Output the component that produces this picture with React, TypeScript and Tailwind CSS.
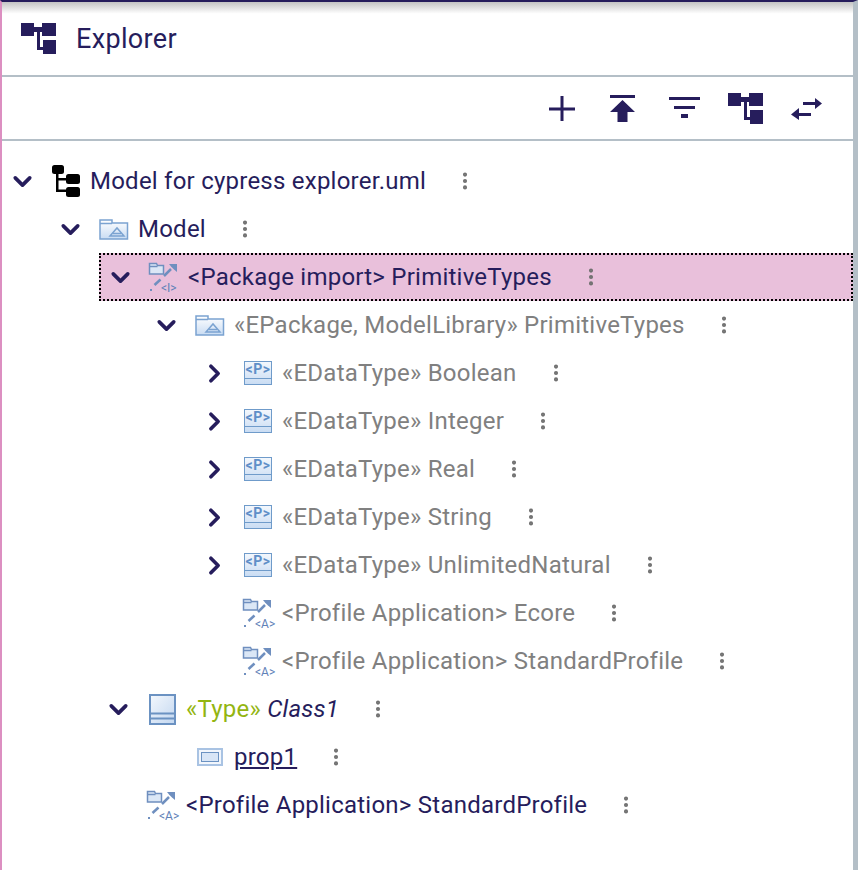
import { ChevronDown, ChevronRight, EllipsisVertical } from 'lucide-react'

const navy = 'text-[#261d5c]'

function TreeIcon({ className }: { className: string }) {
  return (
    <svg viewBox="0 0 35 31" className={className} fill="currentColor">
      <rect x="0" y="0" width="13" height="13" />
      <rect x="21" y="0" width="14" height="13" />
      <rect x="22" y="17" width="13" height="14" />
      <path d="M13 4h8v5h-2v15h3v3h-6V9h-3z" />
    </svg>
  )
}

function ModelFileIcon() {
  return (
    <svg viewBox="0 0 30 32" className="w-[30px] h-[32px] text-black" fill="currentColor">
      <rect x="1" y="0" width="12" height="9" rx="2.5" />
      <rect x="15" y="9" width="14" height="10" rx="2.5" />
      <rect x="15" y="22" width="14" height="10" rx="2.5" />
      <path d="M5 8h2.500v5H15v2.500H7.500v9H15V27H5z" />
    </svg>
  )
}

function FolderIcon() {
  return (
    <svg viewBox="0 0 30 21" className="w-[30px] h-[21px]">
      <defs>
        <linearGradient id="fold" x1="0" y1="0" x2="0" y2="1">
          <stop offset="0" stopColor="#ffffff" />
          <stop offset="1" stopColor="#c9dcf3" />
        </linearGradient>
      </defs>
      <path d="M1 20V1h12v3h15.500v16z" fill="url(#fold)" stroke="#7ba3d1" strokeWidth="1.500" />
      <path d="M1 4.500h12" stroke="#7ba3d1" strokeWidth="1.500" />
      <path d="M11 17l7-8 7 8z" fill="none" stroke="#7ba3d1" strokeWidth="1.500" />
      <path d="M14 14.500h8" stroke="#7ba3d1" strokeWidth="1.500" />
    </svg>
  )
}

// dashed arrow with a small folder, label is the little <I> or <A>
function ImportIcon({ label }: { label: string }) {
  return (
    <span className="relative block w-[32px] h-[32px]">
      <svg viewBox="0 0 32 32" className="w-[32px] h-[32px]">
        <path d="M1.500 13V2.500h7l1 2h6V13z" fill="#dbe7f6" stroke="#6f8fbf" strokeWidth="1.500" />
        <path d="M1.500 5.500h8" stroke="#6f8fbf" strokeWidth="1.500" />
        <path d="M16 15l7-7" stroke="#6f8fbf" strokeWidth="2.500" />
        <path d="M21 3h8v8l-3-2.500-3-3z" fill="#6f8fbf" />
        <path d="M6.500 24l6-5.500" stroke="#6f8fbf" strokeWidth="2.500" />
        <rect x="2" y="28" width="2" height="2" fill="#6f8fbf" />
      </svg>
      <span className="absolute left-[13px] top-[21px] text-[12px] tracking-normal leading-[12px] text-[#5f82b8]">{label}</span>
    </span>
  )
}

function DataTypeIcon() {
  return (
    <svg viewBox="0 0 28 24" className="w-[28px] h-[24px]">
      <defs>
        <linearGradient id="dt" x1="0" y1="0" x2="0" y2="1">
          <stop offset="0" stopColor="#f4f8fd" />
          <stop offset="1" stopColor="#c9dcf3" />
        </linearGradient>
      </defs>
      <rect x=".5" y=".5" width="27" height="23" fill="url(#dt)" stroke="#6f9bca" />
      <path d="M.5 17.500h27" stroke="#6f9bca" />
      <text x="14" y="13" textAnchor="middle" fontSize="14" fontWeight="700" letterSpacing=".6" fill="#5f8fc8" fontFamily="Roboto, sans-serif">{'<P>'}</text>
    </svg>
  )
}

function ClassIcon() {
  return (
    <svg viewBox="0 0 27 31" className="w-[27px] h-[31px]">
      <defs>
        <linearGradient id="cl" x1="0" y1="0" x2="1" y2="1">
          <stop offset="0" stopColor="#f4f8fd" />
          <stop offset="1" stopColor="#c3d7f0" />
        </linearGradient>
      </defs>
      <rect x="1" y="1" width="25" height="29" fill="url(#cl)" stroke="#6b92c2" strokeWidth="2" />
      <path d="M1 19.500h25M1 24.500h25" stroke="#6b92c2" strokeWidth="2" />
    </svg>
  )
}

function PropertyIcon() {
  return (
    <svg viewBox="0 0 26 18" className="w-[26px] h-[18px]">
      <rect x="1" y="1" width="24" height="16" fill="#f2f6fc" stroke="#a9c3e3" strokeWidth="2" />
      <rect x="4.500" y="4.500" width="17" height="9" fill="#d8e5f6" stroke="#6b92c2" />
    </svg>
  )
}

type Row = {
  indent: number
  chevron?: 'down' | 'right'
  icon: React.ReactNode
  text: React.ReactNode
  grey?: boolean
  selected?: boolean
}

const rows: Row[] = [
  { indent: 4, chevron: 'down', icon: <ModelFileIcon />, text: 'Model for cypress explorer.uml' },
  { indent: 52, chevron: 'down', icon: <FolderIcon />, text: 'Model' },
  { indent: 100, chevron: 'down', icon: <ImportIcon label="<I>" />, text: '<Package import> PrimitiveTypes', selected: true },
  { indent: 148, chevron: 'down', icon: <FolderIcon />, text: '«EPackage, ModelLibrary» PrimitiveTypes', grey: true },
  { indent: 196, chevron: 'right', icon: <DataTypeIcon />, text: '«EDataType» Boolean', grey: true },
  { indent: 196, chevron: 'right', icon: <DataTypeIcon />, text: '«EDataType» Integer', grey: true },
  { indent: 196, chevron: 'right', icon: <DataTypeIcon />, text: '«EDataType» Real', grey: true },
  { indent: 196, chevron: 'right', icon: <DataTypeIcon />, text: '«EDataType» String', grey: true },
  { indent: 196, chevron: 'right', icon: <DataTypeIcon />, text: '«EDataType» UnlimitedNatural', grey: true },
  { indent: 196, icon: <ImportIcon label="<A>" />, text: '<Profile Application> Ecore', grey: true },
  { indent: 196, icon: <ImportIcon label="<A>" />, text: '<Profile Application> StandardProfile', grey: true },
  {
    indent: 100,
    chevron: 'down',
    icon: <ClassIcon />,
    text: (
      <>
        <span className="text-[#93b511]">«Type»</span> <span className="italic">Class1</span>
      </>
    ),
  },
  { indent: 148, icon: <PropertyIcon />, text: <span className="underline">prop1</span> },
  { indent: 100, icon: <ImportIcon label="<A>" />, text: '<Profile Application> StandardProfile' },
]

function TreeRow({ row }: { row: Row }) {
  // selected row gets the pink fill and dotted frame from its own left edge
  return (
    <div className="h-[48px]" style={{ paddingLeft: row.selected ? row.indent - 3 : row.indent }}>
      <div
        className={`flex items-center h-[48px] ${row.selected ? 'bg-[#e9c0db] border-2 border-dotted border-black pl-[3px]' : ''}`}
      >
        <span className={`w-[32px] flex justify-center shrink-0 ${navy}`}>
          {row.chevron === 'down' && <ChevronDown size={29} strokeWidth={3} />}
          {row.chevron === 'right' && <ChevronRight size={29} strokeWidth={3} />}
        </span>
        <span className="ml-[8px] w-[40px] flex justify-center shrink-0">{row.icon}</span>
        <span className={`ml-[4px] whitespace-nowrap ${row.grey ? 'text-[#808080]' : navy}`}>{row.text}</span>
        <span className="ml-[27px] w-[24px] flex justify-center shrink-0 text-[#707070]">
          <EllipsisVertical size={22} strokeWidth={2.500} />
        </span>
      </div>
    </div>
  )
}

export default function App() {
  return (
    <div className={`h-[870px] w-[858px] overflow-hidden border-l-2 border-l-[#dc8fc1] border-t-2 border-t-[#261d5c] border-r-[5px] border-r-[#b4bfc7] bg-white font-['Roboto',sans-serif] text-[24px] tracking-[0.235px] ${navy}`}>
      <div className="h-[75px] flex items-center pl-[19px] border-b-2 border-[#b4bfc7] bg-gradient-to-b from-[#c4c4c4] via-white via-[16%] to-white">
        <TreeIcon className="w-[35px] h-[31px]" />
        <span className="ml-[20px] text-[27px] tracking-[0.35px] translate-y-[1px]">Explorer</span>
      </div>
      <div className="h-[64px] flex items-center justify-end gap-[25px] pr-[29px] border-b-2 border-[#b4bfc7]">
        <svg viewBox="0 0 36 36" className="w-[36px] h-[36px]" fill="currentColor">
          <path d="M5 17.500h11.500V6h3v11.500H31v3H19.500V31h-3V20.500H5z" />
        </svg>
        <svg viewBox="0 0 36 36" className="w-[36px] h-[36px]" fill="currentColor">
          <path d="M5 5h25v3H5zM17.500 10L30 22h-7.500v10h-10V22H5z" />
        </svg>
        <svg viewBox="0 0 36 36" className="w-[36px] h-[36px]" fill="currentColor">
          <path d="M3 7h31v3H3zM8 16h21v3H8zM15 24h7v4h-7z" />
        </svg>
        <span className="w-[36px] flex justify-center">
          <TreeIcon className="w-[35px] h-[31px]" />
        </span>
        <svg viewBox="0 0 36 36" className="w-[36px] h-[36px]" fill="currentColor">
          <path d="M15 12h12V8l7 5.500-7 5.500v-4H15zM3 24.500L11 18v5h12v3H11v4z" />
        </svg>
      </div>
      <div className="pt-[16px]">
        {rows.map((row, i) => (
          <TreeRow key={i} row={row} />
        ))}
      </div>
    </div>
  )
}
